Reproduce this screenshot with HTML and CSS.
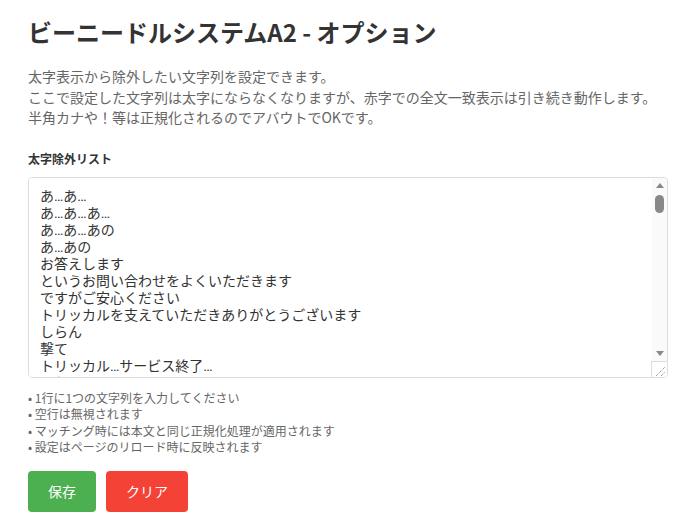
FILE: index.html
```html
<!DOCTYPE html>
<html lang="ja">
<head>
  <meta charset="UTF-8">
  <meta name="viewport" content="width=device-width, initial-scale=1.0">
  <title>ビーニードルシステムA2 - オプション</title>
  <link rel="stylesheet" href="styles.css">
</head>
<body>
  <div class="container">
    <h1>ビーニードルシステムA2 - オプション</h1>
    <p class="description">
      太字表示から除外したい文字列を設定できます。<br>
      ここで設定した文字列は太字にならなくなりますが、赤字での全文一致表示は引き続き動作します。<br>
      半角カナや！等は正規化されるのでアバウトでOKです。
    </p>

    <!-- Exclude List -->
    <div class="form-group">
      <label for="excludeList">太字除外リスト</label>
      <div class="textarea-box">
        <textarea id="excludeList" spellcheck="false">あ…あ…
あ…あ…あ…
あ…あ…あの
あ…あの
お答えします
というお問い合わせをよくいただきます
ですがご安心ください
トリッカルを支えていただきありがとうございます
しらん
撃て
トリッカル…サービス終了…
それでは
よろしくお願いします
ありがとうございました
またね
おやすみなさい
さようなら
はい
いいえ
わかりました
また明日
おつかれさまです
ちょっと待って
なるほど
すみません
よろしく
ふむふむ
うーん
えっと
あの…</textarea>
        <div class="scrollbar">
          <div class="arrow up"></div>
          <div class="track"><div class="thumb"></div></div>
          <div class="arrow down"></div>
          <div class="resizer">
            <svg width="14" height="15" viewBox="0 0 14 15">
              <path d="M4 14 L13 5 M9 14 L13 10" stroke="#777" stroke-width="1" stroke-dasharray="1 1" fill="none"/>
            </svg>
          </div>
        </div>
      </div>
      <ul class="hints">
        <li>1行に1つの文字列を入力してください</li>
        <li>空行は無視されます</li>
        <li>マッチング時には本文と同じ正規化処理が適用されます</li>
        <li>設定はページのリロード時に反映されます</li>
      </ul>
    </div>

    <div class="buttons">
      <button class="btn save">保存</button>
      <button class="btn clear">クリア</button>
    </div>
  </div>
</body>
</html>
```

FILE: styles.css
```css
/* General Styles */
body {
  font-family: "Noto Sans CJK JP", "Noto Sans", sans-serif;
  margin: 0;
  padding: 0;
  color: #333;
  background: #fff;
}
.container {
  width: 640px;
  padding: 14px 0 0 28px;
}
h1 {
  font-size: 24px;
  font-weight: bold;
  margin: 0 0 16px;
  line-height: 36px;
  color: #333;
}
.description {
  font-size: 14px;
  line-height: 20.5px;
  color: #666;
  margin: 0 0 22px;
}
.form-group label {
  display: block;
  font-size: 12px;
  font-weight: bold;
  color: #333;
  line-height: 18px;
  margin-bottom: 9px;
}
/* Textarea with scrollbar */
.textarea-box {
  display: flex;
  box-sizing: border-box;
  width: 640px;
  height: 201px;
  border: 1px solid #ddd;
  border-radius: 4px;
  overflow: hidden;
}
.textarea-box textarea {
  flex: 1;
  border: none;
  outline: none;
  padding: 10px 10px 0 11px;
  margin: 0;
  font-family: Roboto, "Noto Sans CJK JP", sans-serif;
  font-size: 14px;
  line-height: 17px;
  color: #333;
  resize: none;
  overflow: hidden;
}
.scrollbar {
  width: 15px;
  display: flex;
  flex-direction: column;
  background: #fafafa;
}
.arrow {
  height: 15px;
  display: flex;
  justify-content: center;
  align-items: center;
}
.arrow::before {
  content: "";
  width: 0;
  height: 0;
  border-left: 4px solid transparent;
  border-right: 4px solid transparent;
}
.arrow.up::before {
  border-bottom: 5px solid #888;
}
.arrow.down::before {
  border-top: 5px solid #888;
}
.track {
  flex: 1;
  padding: 2px 3px 0 3px;
}
.thumb {
  height: 18px;
  background: #888;
  border-radius: 5px;
}
.resizer {
  height: 15px;
  background: #fff;
  border-top: 1px solid #ddd;
  border-left: 1px solid #ddd;
  margin-left: -1px;
}
.resizer svg {
  display: block;
}
.hints {
  list-style: none;
  padding: 0;
  margin: 12px 0 0;
  font-size: 12px;
  line-height: 16.5px;
  color: #666;
}
.hints li::before {
  content: "• ";
}
.buttons {
  display: flex;
  gap: 10px;
  margin-top: 15px;
}
.btn {
  border: none;
  border-radius: 4px;
  padding: 0 20px;
  height: 41px;
  font-family: "Noto Sans CJK JP", sans-serif;
  font-size: 14px;
  color: white;
  cursor: pointer;
}
.btn.save {
  background-color: #4caf50;
}
.btn.clear {
  background-color: #f44336;
}
```
